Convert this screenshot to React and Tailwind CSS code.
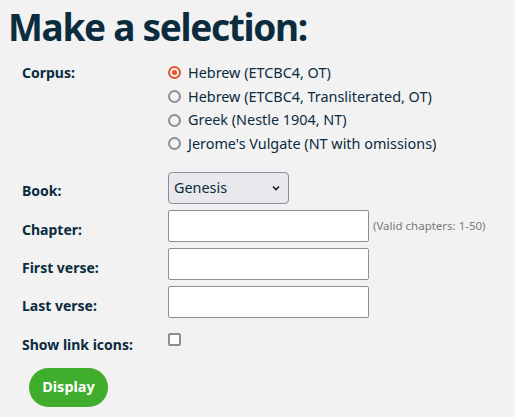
import { useState } from "react";

const corpora = [
  "Hebrew (ETCBC4, OT)",
  "Hebrew (ETCBC4, Transliterated, OT)",
  "Greek (Nestle 1904, NT)",
  "Jerome's Vulgate (NT with omissions)",
];

const Label = ({ children, className = "" }) => (
  <div className={"w-[146px] shrink-0 font-bold text-[14px] text-[#0b2b3e] " + className}>{children}</div>
);

const TextBox = () => (
  <input className="w-[201px] h-[32px] bg-white border border-[#8e8c98] rounded-[2px] outline-none" />
);

export default function App() {
  const [corpus, setCorpus] = useState(0);
  const [links, setLinks] = useState(false);

  return (
    <div className="min-h-[417px] bg-[#f2f2f2] text-[#0b2b3e] font-['Noto_Sans',sans-serif] pl-[8px] pt-[1px]">
      <h1 className="text-[37px] font-bold leading-[52px] tracking-[-1.3px]">Make a selection:</h1>

      <div className="pl-[14px] mt-[8px] flex flex-col">
        {/* CORPUS */}
        <div className="flex">
          <Label className="leading-[23.7px]">Corpus:</Label>
          <div className="flex flex-col">
            {corpora.map((c, i) => (
              <label key={c} onClick={() => setCorpus(i)} className="flex items-center gap-[7px] h-[23.7px] text-[14.4px] cursor-pointer">
                <span
                  className={
                    "w-[13px] h-[13px] rounded-full border-2 flex items-center justify-center " +
                    (corpus === i ? "border-[#e8542a]" : "border-[#8c8c96]")
                  }
                >
                  {corpus === i && <span className="w-[5px] h-[5px] rounded-full bg-[#e8542a]" />}
                </span>
                <span>{c}</span>
              </label>
            ))}
          </div>
        </div>

        {/* BOOK */}
        <div className="flex items-center mt-[16px] h-[32px]">
          <Label className="pt-[5px]">Book:</Label>
          <div className="w-[121px] h-[32px] rounded-[4px] border border-[#8e8c98] bg-[#e9e9ed] flex items-center justify-between pl-[5px] pr-[7px] text-[14.4px]">
            <span>Genesis</span>
            <svg width="10" height="10" viewBox="0 0 10 10">
              <path d="M2 3.5 L5 6.5 L8 3.5" fill="none" stroke="#1a1a1a" strokeWidth="1.6" />
            </svg>
          </div>
        </div>

        {/* CHAPTER */}
        <div className="flex items-center mt-[6px] h-[32px]">
          <Label className="pt-[7px]">Chapter:</Label>
          <TextBox />
          <span className="ml-[4px] text-[11.5px] text-[#7a7a7a]">(Valid chapters: 1-50)</span>
        </div>

        <div className="flex items-center mt-[6px] h-[32px]">
          <Label className="pt-[8px]">First verse:</Label>
          <TextBox />
        </div>

        <div className="flex items-center mt-[6px] h-[32px]">
          <Label className="pt-[8px]">Last verse:</Label>
          <TextBox />
        </div>

        {/* LINK ICONS */}
        <div className="flex items-start mt-[15px]">
          <Label className="pt-[1px]">Show link icons:</Label>
          <span
            onClick={() => setLinks(!links)}
            className="w-[13px] h-[13px] border-2 border-[#8c8c96] rounded-[2px] bg-white block cursor-pointer"
          />
        </div>
      </div>

      <button className="ml-[21px] mt-[13px] w-[79px] h-[39px] rounded-full bg-[#40ae2c] text-white font-bold text-[14.5px]">
        Display
      </button>
    </div>
  );
}
